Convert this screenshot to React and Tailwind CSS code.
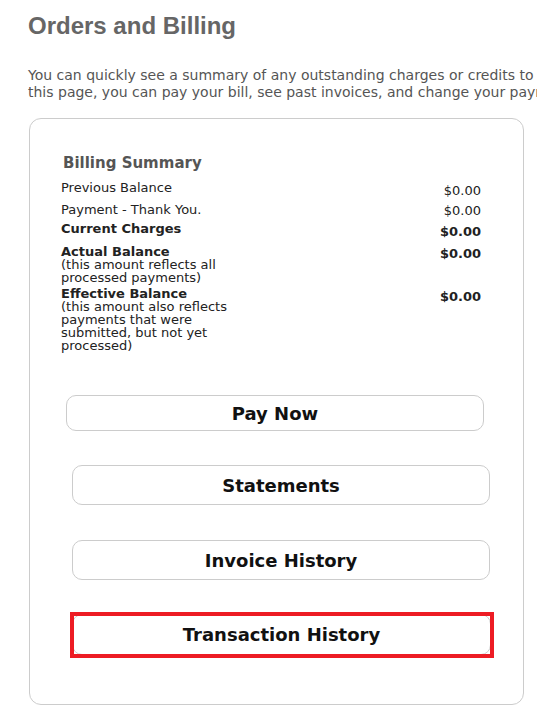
import React from "react";

const rows = [
    { label: "Previous Balance", value: "$0.00", bold: false, mt: "mt-[9px]", vt: "mt-[3px] -mb-[3px]" },
    { label: "Payment - Thank You.", value: "$0.00", bold: false, mt: "mt-[9px]", vt: "mt-[1px] -mb-[1px]" },
    { label: "Current Charges", value: "$0.00", bold: true, mt: "mt-[6px]", vt: "mt-[3px] -mb-[3px]" },
    { label: "Actual Balance", note: "(this amount reflects all processed payments)", value: "$0.00", bold: true, mt: "mt-[10px]", vt: "mt-[2px]" },
    { label: "Effective Balance", note: "(this amount also reflects payments that were submitted, but not yet processed)", value: "$0.00", bold: true, mt: "mt-[3px]", vt: "mt-[3px]" },
];

const btn = "flex items-center justify-center border border-[#ccc] rounded-[10px] bg-white text-[18px] font-bold text-[#111]";

const App = () => {
    return (
        <div className="min-h-[716px] w-[537px] overflow-hidden bg-white font-['DejaVu_Sans',Verdana,sans-serif]">
            <div className="pl-[28px] pt-[12px]">
                <h1 className="font-['Liberation_Sans',Arial,sans-serif] text-[24px] leading-[28px] font-bold text-[#666]">
                    Orders and Billing
                </h1>
                <p className="mt-[27px] text-[14px] leading-[17px] text-[#555] whitespace-nowrap">
                    You can quickly see a summary of any outstanding charges or credits to your account. From
                    <br />
                    this page, you can pay your bill, see past invoices, and change your payment method.
                </p>
                <div className="mt-[17px] ml-px w-[495px] h-[587px] border border-[#ccc] rounded-[12px] pt-[35px] pr-[42px]">
                    <h2 className="pl-[33px] text-[15px] leading-[18px] font-bold text-[#555]">Billing Summary</h2>
                    <div className="pl-[31px] text-[13px] leading-[13px] text-[#222]">
                        {rows.map((r) => (
                            <div key={r.label} className={"flex items-start justify-between " + r.mt}>
                                <div className="w-[172px]">
                                    <div className={r.bold ? "font-bold" : ""}>{r.label}</div>
                                    {r.note && <div>{r.note}</div>}
                                </div>
                                <div className={(r.bold ? "font-bold " : "") + r.vt}>{r.value}</div>
                            </div>
                        ))}
                    </div>
                    <button className={btn + " mt-[43px] ml-[36px] w-[418px] h-[36px]"}>Pay Now</button>
                    <button className={btn + " mt-[34px] ml-[42px] w-[418px] h-[40px]"}>Statements</button>
                    <button className={btn + " mt-[35px] ml-[42px] w-[418px] h-[40px]"}>Invoice History</button>
                    <div className="mt-[32px] ml-[40px] w-[424px] h-[46px] border-4 border-[#ed1c24] overflow-hidden">
                        <button className={btn + " -ml-[2px] -mt-[2px] w-[419px] h-[41px]"}>Transaction History</button>
                    </div>
                </div>
            </div>
        </div>
    );
};

export default App;
